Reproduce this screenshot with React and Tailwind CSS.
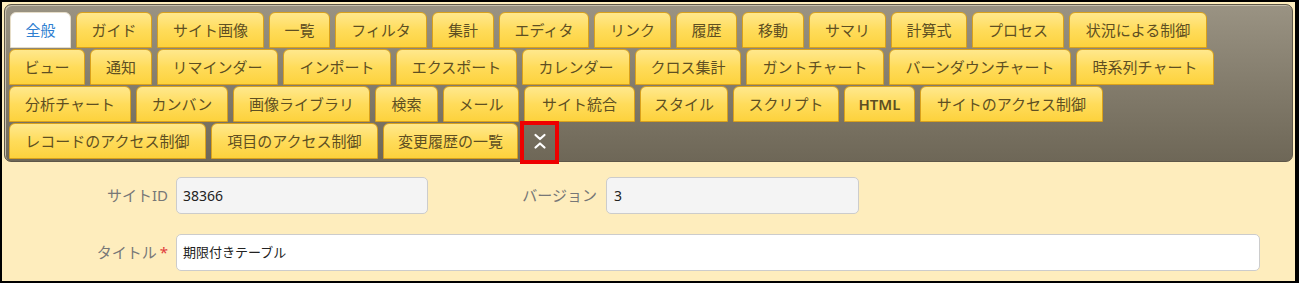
import React from "react";

const rows = [
  [
    ["全般", 61, true],
    ["ガイド", 76],
    ["サイト画像", 107],
    ["一覧", 61],
    ["フィルタ", 92],
    ["集計", 62],
    ["エディタ", 90],
    ["リンク", 77],
    ["履歴", 61],
    ["移動", 62],
    ["サマリ", 77],
    ["計算式", 76],
    ["プロセス", 92],
    ["状況による制御", 138],
  ],
  [
    ["ビュー", 76],
    ["通知", 62],
    ["リマインダー", 121],
    ["インポート", 108],
    ["エクスポート", 121],
    ["カレンダー", 108],
    ["クロス集計", 106],
    ["ガントチャート", 138],
    ["バーンダウンチャート", 182],
    ["時系列チャート", 138],
  ],
  [
    ["分析チャート", 122],
    ["カンバン", 92],
    ["画像ライブラリ", 137],
    ["検索", 63],
    ["メール", 76],
    ["サイト統合", 111],
    ["スタイル", 88],
    ["スクリプト", 106],
    ["HTML", 71],
    ["サイトのアクセス制御", 183],
  ],
  [
    ["レコードのアクセス制御", 197],
    ["項目のアクセス制御", 167],
    ["変更履歴の一覧", 135],
  ],
];

function Tab({ label, width, active }) {
  const base =
    "h-[36px] shrink-0 flex items-center justify-center rounded-t-[6px] border text-[15px] leading-none whitespace-nowrap";
  if (active) {
    return (
      <div
        className={`${base} bg-white border-[#e6ddc8] text-[#2f7fd1]`}
        style={{ width }}
      >
        {label}
      </div>
    );
  }
  return (
    <div
      className={`${base} bg-gradient-to-b from-[#ffe88c] via-[#ffdc5a] to-[#fdd23c] border-[#d9a11c] text-[#5e4f22] ${
        label === "HTML" ? "font-semibold text-[14px]" : ""
      }`}
      style={{ width }}
    >
      {label}
    </div>
  );
}

export default function App() {
  return (
    <div
      className="w-[1299px] h-[283px] bg-black pl-[2px] pt-[2px] pr-[4px] pb-[2px]"
      style={{ fontFamily: '"Noto Sans", "Noto Sans CJK JP", sans-serif' }}
    >
      <div className="w-full h-full bg-[#feedbd] pt-[2px] px-[2px] flex flex-col">
        {/* tab panel */}
        <div className="h-[158px] rounded-[7px] border border-[#5e5748] bg-gradient-to-b from-[#9a9383] to-[#6e6757] shadow-[inset_1px_1px_0_#c9c1ae] pl-[4px] pt-[7px] flex flex-col gap-[1px]">
          {rows.map((row, ri) => (
            <div
              key={ri}
              className={`flex gap-[5px] ${ri === 0 ? "ml-[1px]" : ""}`}
            >
              {row.map(([label, w, active]) => (
                <Tab key={label} label={label} width={w} active={active} />
              ))}
              {ri === 3 && (
                <div className="relative w-[33px] h-[36px] flex items-center justify-center">
                  <svg width="14" height="18" viewBox="0 0 14 18">
                    <polyline
                      points="2.5,3 7,7 11.5,3"
                      fill="none"
                      stroke="#ffffff"
                      strokeWidth="2.2"
                      strokeLinecap="round"
                      strokeLinejoin="round"
                    />
                    <polyline
                      points="2.5,15.5 7,11.5 11.5,15.5"
                      fill="none"
                      stroke="#ffffff"
                      strokeWidth="2.2"
                      strokeLinecap="round"
                      strokeLinejoin="round"
                    />
                  </svg>
                  <div className="absolute -left-[3px] -top-[2px] w-[39px] h-[43px] border-[4px] border-[#ee0000]" />
                </div>
              )}
            </div>
          ))}
        </div>

        {/* form */}
        <div className="mt-[15px] flex flex-col gap-[20px]">
          <div className="flex items-center">
            <div className="w-[164px] text-right text-[15px] text-[#777777]">
              サイトID
            </div>
            <div className="ml-[8px] w-[252px] h-[37px] rounded-[5px] border border-[#cccccc] bg-[#f4f4f4] flex items-center pl-[6px] text-[14px] text-[#222222]">
              38366
            </div>
            <div className="w-[169px] text-right text-[15px] text-[#777777]">
              バージョン
            </div>
            <div className="ml-[9px] w-[253px] h-[37px] rounded-[5px] border border-[#cccccc] bg-[#f4f4f4] flex items-center pl-[7px] text-[14px] text-[#222222]">
              3
            </div>
          </div>
          <div className="flex items-center">
            <div className="w-[164px] text-right text-[15px] text-[#777777]">
              タイトル<span className="text-[#e03c3c] ml-[3px]">*</span>
            </div>
            <div className="ml-[8px] w-[1084px] h-[37px] rounded-[5px] border border-[#cccccc] bg-white flex items-center pl-[6px] text-[13px] text-[#222222]">
              期限付きテーブル
            </div>
          </div>
        </div>
      </div>
    </div>
  );
}
